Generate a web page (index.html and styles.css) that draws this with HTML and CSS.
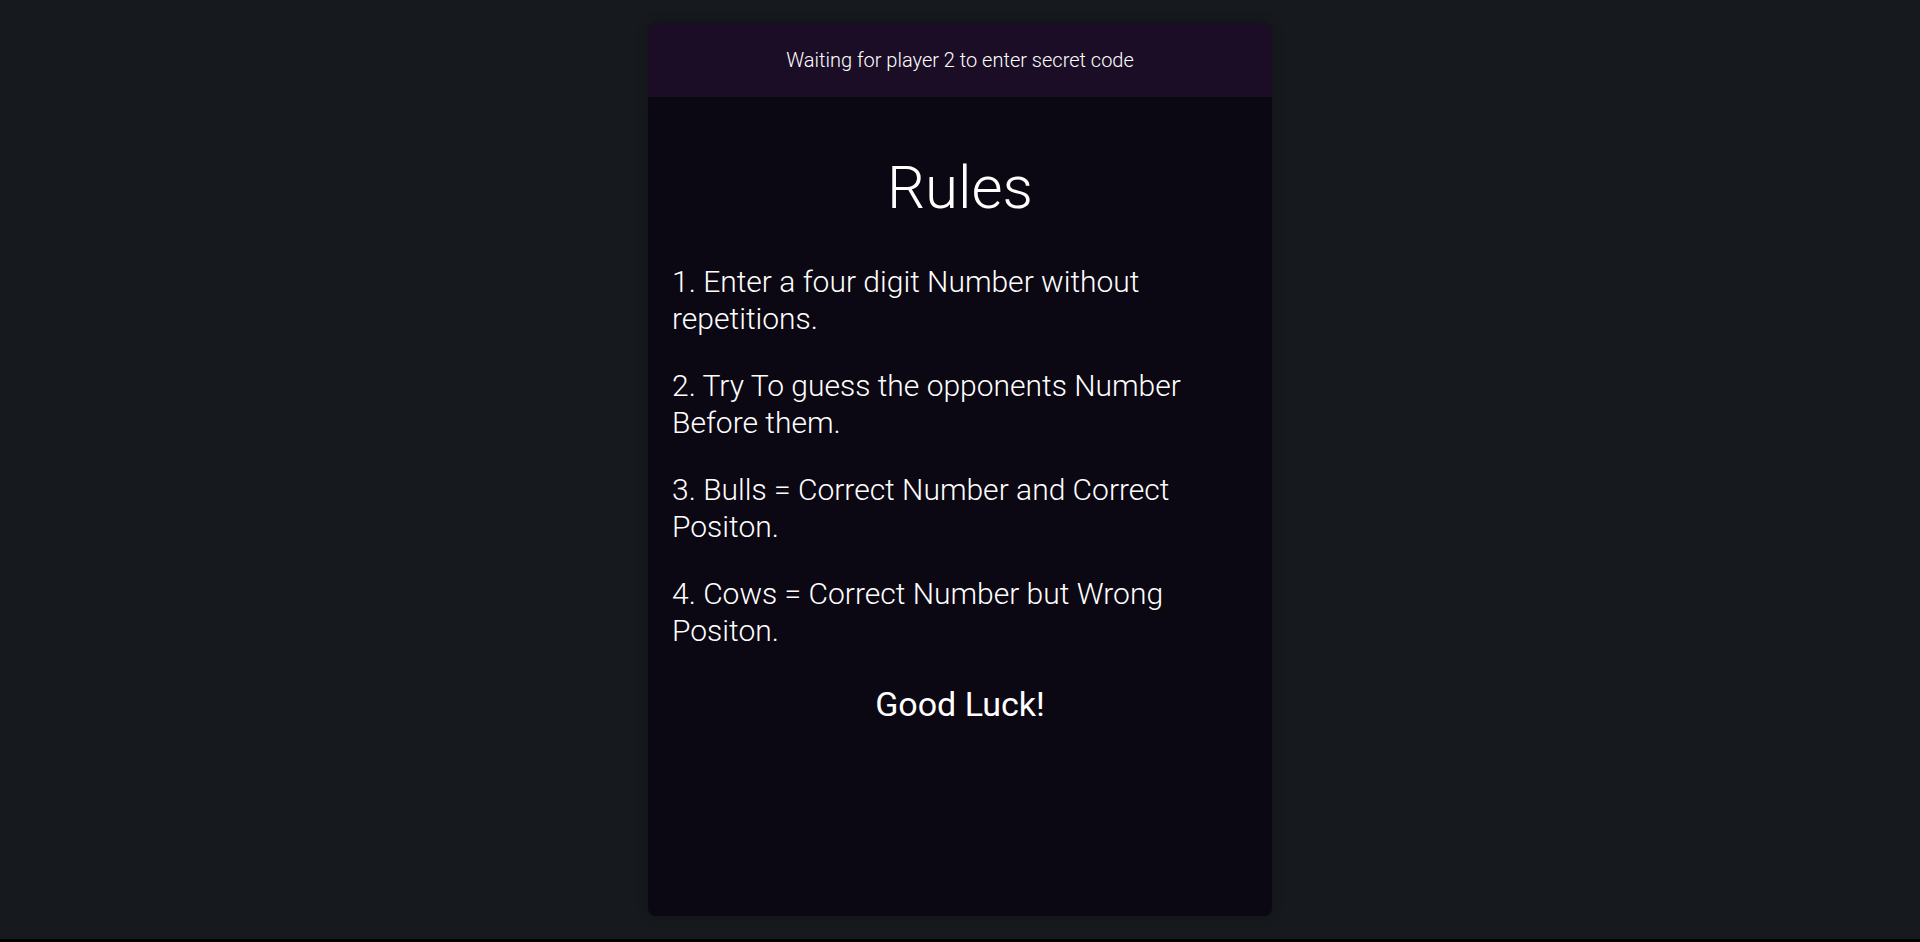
FILE: index.html
```html
<!DOCTYPE html>
<html>
<head>
<meta charset="utf-8">
<link rel="stylesheet" href="styles.css">
</head>
<body>
<div class="page">
  <div class="card">
    <div class="card-header">Waiting for player 2 to enter secret code</div>
    <div class="card-body">
      <h1 class="title">Rules</h1>
      <p class="rule">1. Enter a four digit Number without repetitions.</p>
      <p class="rule">2. Try To guess the opponents Number Before them.</p>
      <p class="rule">3. Bulls = Correct Number and Correct Positon.</p>
      <p class="rule">4. Cows = Correct Number but Wrong Positon.</p>
      <h2 class="luck">Good Luck!</h2>
    </div>
  </div>
</div>
</body>
</html>
```

FILE: styles.css
```css
html {
  background: #000;
}
body {
  margin: 0;
  font-family: Roboto, "Liberation Sans", sans-serif;
  color: #fff;
}
.page {
  height: 939px;
  background: #16191d;
  display: flex;
  justify-content: center;
  padding-top: 23px;
  box-sizing: border-box;
}
.card {
  width: 624px;
  height: 893px;
  background: #0c0813;
  border-radius: 8px;
  overflow: hidden;
  display: flex;
  flex-direction: column;
  box-shadow: 0 0 12px rgba(0,0,0,0.25);
}
.card-header {
  height: 74px;
  background: #1b0d26;
  display: flex;
  align-items: center;
  justify-content: center;
  font-size: 20px;
  font-weight: 300;
  flex-shrink: 0;
}
.card-body {
  padding: 0 24px;
  display: flex;
  flex-direction: column;
}
.title {
  margin: 55px 0 9px;
  font-size: 60px;
  line-height: 72px;
  font-weight: 300;
  text-align: center;
}
.rule {
  margin: 30px 0 0;
  font-size: 30px;
  line-height: 37px;
  font-weight: 300;
}
.luck {
  margin: 35px 0 0;
  font-size: 34px;
  line-height: 40px;
  font-weight: 400;
  text-align: center;
}
```
